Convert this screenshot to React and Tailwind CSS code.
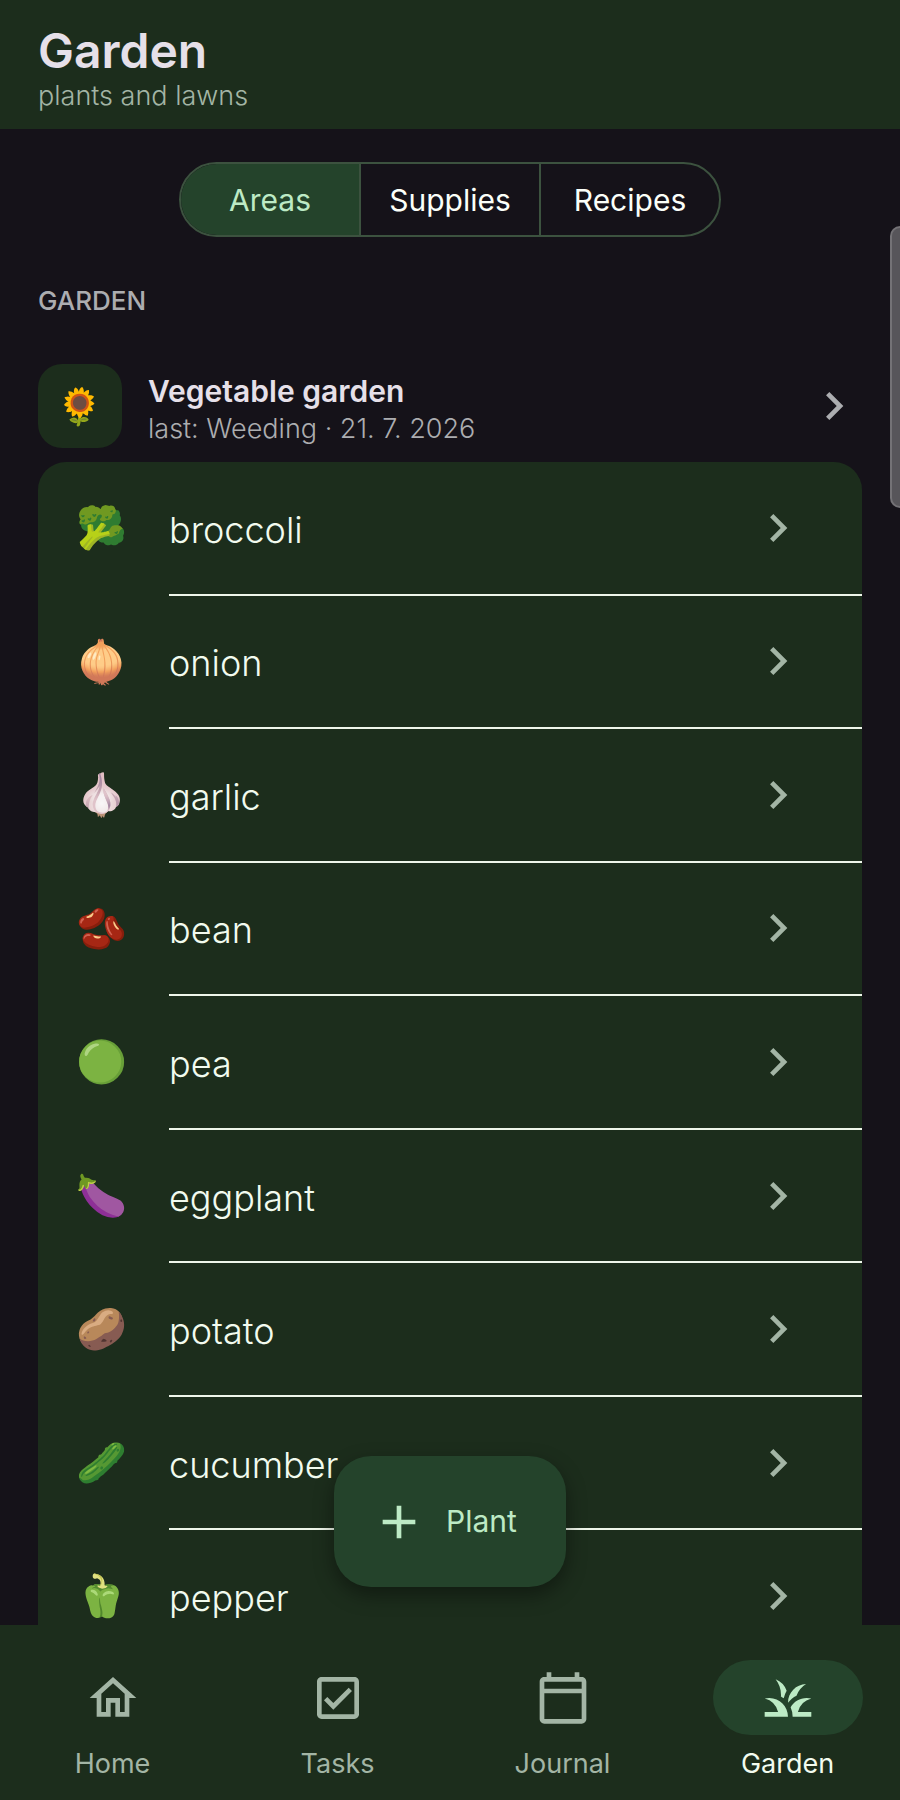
import { MdOutlineHome, MdOutlineCheckBox, MdOutlineCalendarToday, MdGrass, MdChevronRight, MdAdd } from "react-icons/md";

const plants = [
  ["🥦", "broccoli"],
  ["🧅", "onion"],
  ["🧄", "garlic"],
  ["🫘", "bean"],
  ["🟢", "pea"],
  ["🍆", "eggplant"],
  ["🥔", "potato"],
  ["🥒", "cucumber"],
  ["🫑", "pepper"],
];

const tabs = ["Areas", "Supplies", "Recipes"];

const destinations = [
  ["Home", MdOutlineHome],
  ["Tasks", MdOutlineCheckBox],
  ["Journal", MdOutlineCalendarToday],
  ["Garden", MdGrass],
];

export default function App() {
  return (
    <div className="relative flex h-screen flex-col overflow-hidden bg-[#151219] font-['Inter','Noto_Color_Emoji',sans-serif] text-[#f2fbef]">
      <header className="bg-[#1c2d1c] px-[38px] pt-6 pb-[15px]">
        <h1 className="text-[48px] leading-[54px] font-semibold text-[#e6e0e9]">Garden</h1>
        <p className="text-[27px] leading-9 font-light text-[#a3b5a5]">plants and lawns</p>
      </header>

      <main className="relative min-h-0 flex-1 overflow-hidden px-[38px] pt-[33px]">
        <div className="mx-auto flex h-[75px] w-[542px] overflow-hidden rounded-full border-2 border-[#3c523f]">
          {tabs.map((tab, i) => (
            <button
              key={tab}
              type="button"
              aria-pressed={i === 0}
              className={`flex-1 pt-0.5 text-[30px] ${i === 0 ? "bg-[#24432b] text-[#bdeac5]" : "border-l-2 border-[#3c523f] text-[#fbfff9]"}`}
            >
              {tab}
            </button>
          ))}
        </div>

        <h2 className="mt-[46px] text-[26px] leading-9 font-medium text-[#acadb0]">GARDEN</h2>

        <a href="#vegetable-garden" className="mt-[45px] flex items-center">
          <span className="flex size-[84px] items-center justify-center rounded-3xl bg-[#1c2d1c] text-[36px]">🌻</span>
          <span className="ml-[26px] flex flex-1 flex-col pt-2">
            <span className="text-[30px] leading-[38px] font-semibold text-[#e6e0e9]">Vegetable garden</span>
            <span className="text-[27px] leading-[38px] font-light text-[#acadb0]">last: Weeding · 21. 7. 2026</span>
          </span>
          <MdChevronRight className="size-14 text-[#acadb0]" />
        </a>

        <ul className="mt-[14px] grid min-h-[1202px] auto-rows-fr rounded-[28px] bg-[#1c2d1c]">
          {plants.map(([emoji, name]) => (
            <li key={name} className="flex">
              <a href={`#${name}`} className="flex flex-1">
                <span className="flex w-[131px] items-center justify-center pr-[3px] pb-0.5 text-[41px]">{emoji}</span>
                <span className="flex flex-1 items-center border-b-2 border-[#eef5ea] pr-14">
                  <span className="flex-1 pt-1 text-[36px] font-light">{name}</span>
                  <MdChevronRight className="size-14 text-[#a3b5a5]" />
                </span>
              </a>
            </li>
          ))}
        </ul>

        <div className="absolute top-[97px] right-0 h-[282px] w-[10px] rounded-l-[10px] border-2 border-r-0 border-[#747276] bg-[#57555a]" />

        <button
          type="button"
          className="absolute bottom-[38px] left-1/2 flex h-[131px] w-[232px] -translate-x-1/2 items-center gap-[19px] rounded-[37px] bg-[#24432b] pl-[37px] text-[30px] text-[#bdeac5] shadow-[0_8px_20px_rgba(0,0,0,0.4)]"
        >
          <MdAdd className="size-14" />
          Plant
        </button>
      </main>

      <nav className="flex bg-[#1c2d1c] pt-[35px] pb-[18px]">
        {destinations.map(([label, Icon]) => (
          <a
            key={label}
            href={`#${label.toLowerCase()}`}
            className={`flex flex-1 flex-col items-center gap-[11px] text-[27px] leading-9 ${label === "Garden" ? "text-[#f2fbef]" : "text-[#a3b5a5]"}`}
          >
            <span className={`flex h-[75px] w-[150px] items-center justify-center rounded-full ${label === "Garden" ? "bg-[#24432b] text-[#bdeac5]" : ""}`}>
              <Icon className="size-14" />
            </span>
            {label}
          </a>
        ))}
      </nav>
    </div>
  );
}
